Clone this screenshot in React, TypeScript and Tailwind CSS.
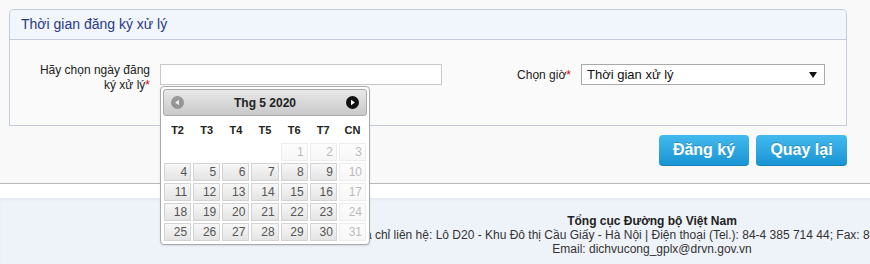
import React from 'react';

const weeks: (number | null)[][] = [
  [null, null, null, null, 1, 2, 3],
  [4, 5, 6, 7, 8, 9, 10],
  [11, 12, 13, 14, 15, 16, 17],
  [18, 19, 20, 21, 22, 23, 24],
  [25, 26, 27, 28, 29, 30, 31],
];

const dayNames = ['T2', 'T3', 'T4', 'T5', 'T6', 'T7', 'CN'];
const disabledDays = [1, 2, 3, 10, 17, 24, 31];

const NavIcon: React.FC<{ dir: 'prev' | 'next' }> = ({ dir }) => (
  <svg width="13" height="13" viewBox="0 0 13 13" className={dir === 'prev' ? 'opacity-50' : ''}>
    <circle cx="6.5" cy="6.5" r="6.5" fill={dir === 'prev' ? '#555' : '#111'} />
    {dir === 'prev' ? (
      <path d="M4 6.5 L8 3.8 L8 9.2 Z" fill="#fff" />
    ) : (
      <path d="M9 6.5 L5 3.8 L5 9.2 Z" fill="#fff" />
    )}
  </svg>
);

const DatePicker: React.FC = () => (
  <div className="absolute left-[-1px] top-[21px] z-10 w-[210px] h-[159px] bg-white border border-[#aaaaaa] rounded-[4px] p-[2px] shadow-[0_1px_2px_rgba(0,0,0,0.1)]">
    <div className="h-[27px] flex items-center justify-between px-[7px] rounded-[3px] border border-[#aaaaaa] bg-gradient-to-b from-[#e8e8e8] to-[#c9c9c9]">
      <NavIcon dir="prev" />
      <span className="text-[12px] font-bold text-[#222]">Thg 5 2020</span>
      <NavIcon dir="next" />
    </div>
    <div className="grid grid-cols-7 gap-x-[2px] px-[1px] h-[27px] items-center pt-[1px]">
      {dayNames.map((d) => (
        <div key={d} className="text-center text-[11px] font-bold text-[#222]">{d}</div>
      ))}
    </div>
    <div className="grid grid-cols-7 gap-[2px] px-[1px]">
      {weeks.flat().map((d, i) =>
        d === null ? (
          <div key={i} className="h-[18px]" />
        ) : (
          <div
            key={i}
            className={
              disabledDays.includes(d)
                ? 'h-[18px] border border-[#d3d3d3] bg-gradient-to-b from-[#fafafa] to-[#ececec] opacity-40 text-right pr-[3px] text-[12px] leading-[16px] text-[#555]'
                : 'h-[18px] border border-[#d3d3d3] bg-gradient-to-b from-[#f7f7f7] to-[#e4e4e4] text-right pr-[3px] text-[12px] leading-[16px] text-[#555]'
            }
          >
            {d}
          </div>
        )
      )}
    </div>
  </div>
);

export default function App() {
  return (
    <div className="w-[870px] h-[264px] overflow-hidden bg-[#f9f9f9] font-['Liberation_Sans',Arial,sans-serif] text-[#222]">
      <div className="pl-[9px] pt-[9px] w-[847px]">
        {/* panel */}
        <div className="border border-[#c4ccdc] rounded-t-[5px]">
          <div className="h-[30px] flex items-center pl-[11px] bg-[#f1f5fc] border-b border-[#c4ccdc] rounded-t-[5px]">
            <span className="text-[14px] text-[#2b3a86]">Thời gian đăng ký xử lý</span>
          </div>
          <div className="h-[85px] flex items-start pt-[24px] bg-[#fafafa]">
            <div className="w-[140px] flex justify-end">
              <div className="w-[114px] text-right text-[12px] leading-[15px] mt-[-1px] text-[#222]">
                Hãy chọn ngày đăng ký xử lý<span className="text-[#d00]">*</span>
              </div>
            </div>
            <div className="relative ml-[10px] w-[282px] h-[21px] bg-white border border-[#c8c8c8]">
              <DatePicker />
            </div>
            <div className="w-[129px] h-[21px] flex items-center justify-end text-[12px] text-[#222]">
              Chọn giờ<span className="text-[#d00]">*</span>
            </div>
            <div className="ml-[10px] w-[244px] h-[21px] bg-white border border-[#a9a9a9] flex items-center justify-between pl-[5px] pr-[7px]">
              <span className="text-[13px] text-[#111]">Thời gian xử lý</span>
              <svg width="8" height="6" viewBox="0 0 8 6">
                <path d="M0 0 L8 0 L4 6 Z" fill="#111" />
              </svg>
            </div>
          </div>
        </div>
        {/* buttons */}
        <div className="flex justify-end gap-[7px] mt-[9px]">
          <button className="w-[90px] h-[31px] rounded-[4px] bg-gradient-to-b from-[#42baee] to-[#1795d3] border-b border-[#1581b6] text-white font-bold text-[16px] [text-shadow:0_-1px_0_rgba(0,0,0,0.2)]">
            Đăng ký
          </button>
          <button className="w-[91px] h-[31px] rounded-[4px] bg-gradient-to-b from-[#42baee] to-[#1795d3] border-b border-[#1581b6] text-white font-bold text-[16px] [text-shadow:0_-1px_0_rgba(0,0,0,0.2)]">
            Quay lại
          </button>
        </div>
      </div>
      {/* divider */}
      <div className="mt-[17px] border-b border-[#b9b9b9]" />
      <div className="h-[14px] bg-white" />
      {/* footer */}
      <div className="w-[1304px] h-[66px] bg-[#eef2f9] shadow-[inset_0_2px_3px_rgba(0,0,0,0.04)] pt-[16px] text-center text-[12px] leading-[14px] text-[#333]">
        <div className="font-bold text-[#222]">Tổng cục Đường bộ Việt Nam</div>
        <div className="whitespace-nowrap">Địa chỉ liên hệ: Lô D20 - Khu Đô thị Cầu Giấy - Hà Nội | Điện thoại (Tel.): 84-4 385 714 44; Fax: 84-4 385 714 45</div>
        <div>Email: dichvucong_gplx@drvn.gov.vn</div>
      </div>
    </div>
  );
}
